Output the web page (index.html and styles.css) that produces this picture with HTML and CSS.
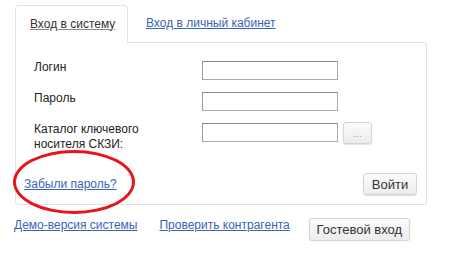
FILE: index.html
```html
<!DOCTYPE html>
<html lang="ru">
<head>
    <meta charset="UTF-8">
    <title>Вход в систему</title>
<link rel="stylesheet" href="styles.css">
</head>
<body>
<div class="login">
    <div class="tabs">
        <div class="tab active"><a class="tab-link">Вход в систему</a></div>
        <div class="tab"><a class="tab-link" href="#">Вход в личный кабинет</a></div>
    </div>
    <div class="panel">
        <div class="row">
            <p class="label">Логин</p>
            <input class="field" type="text">
        </div>
        <div class="row">
            <p class="label">Пароль</p>
            <input class="field" type="password">
        </div>
        <div class="row">
            <p class="label">Каталог ключевого<br>носителя СКЗИ:</p>
            <input class="field" type="text">
            <button class="btn btn-dots">...</button>
        </div>
        <div class="panel-bottom">
            <a class="link forgot" href="#">Забыли пароль?</a>
            <button class="btn btn-enter">Войти</button>
        </div>
    </div>
    <div class="footer">
        <a class="link" href="#">Демо-версия системы</a>
        <a class="link" href="#">Проверить контрагента</a>
        <button class="btn btn-guest">Гостевой вход</button>
    </div>
</div>
<div class="circle"></div>
</body>
</html>
```

FILE: styles.css
```css
body{
    margin: 0;
    background: #fff;
    font-family: Arial, "Liberation Sans", sans-serif;
    font-size: 12px;
    color: #222;
}
.login{
    width: 412px;
    margin: 5px 0 0 15px;
}
.tabs{
    display: flex;
    flex-direction: row;
    height: 37px;
}
.tab{
    display: flex;
    align-items: center;
    white-space: nowrap;
    padding: 0 18px 0 18px;
}
.tab.active{
    width: 113px;
    box-sizing: border-box;
    padding: 0 0 0 14px;
    border: 1px solid #e2e2e2;
    border-bottom: none;
    border-radius: 4px 4px 0 0;
    background: #fff;
    margin-bottom: -1px;
    position: relative;
    z-index: 1;
    height: 38px;
}
.tab-link{
    color: #3b63b6;
    text-decoration: underline;
    padding-bottom: 2px;
}
.tab.active .tab-link{
    color: #333;
    text-decoration-color: #888;
}
.panel{
    height: 163px;
    box-sizing: border-box;
    border: 1px solid #e2e2e2;
    border-radius: 0 3px 3px 3px;
    padding: 18px 9px 9px 18px;
    display: flex;
    flex-direction: column;
}
.row{
    display: flex;
    flex-direction: row;
    align-items: flex-start;
    margin-bottom: 12px;
}
.label{
    width: 168px;
    margin: -1px 0 0;
    line-height: 15px;
}
.field{
    width: 136px;
    height: 19px;
    box-sizing: border-box;
    border: 1px solid #aaa;
    border-top-color: #888;
    border-left-color: #999;
    margin: 0;
    outline: none;
}
.btn{
    font-family: Arial, "Liberation Sans", sans-serif;
    font-size: 12px;
    color: #333;
    background: linear-gradient(180deg, #fbfbfb, #ececec);
    border: 1px solid #d4d4d4;
    border-radius: 3px;
    box-shadow: 0 1px 1px rgba(0,0,0,.12);
    padding: 0;
    cursor: pointer;
}
.btn-dots{
    width: 29px;
    height: 22px;
    margin: -1px 0 0 5px;
    color: #999;
    font-size: 10px;
}
.panel-bottom{
    margin-top: auto;
    display: flex;
    flex-direction: row;
    justify-content: space-between;
    align-items: center;
}
.forgot{
    margin-left: -10px;
}
.btn-enter{
    width: 54px;
    height: 22px;
    font-size: 13px;
}
.link{
    color: #3b63b6;
    text-decoration: underline;
}
.footer{
    display: flex;
    flex-direction: row;
    align-items: flex-start;
    margin: 13px 0 0 -1px;
}
.footer .link{
    margin-top: 0;
}
.footer .link:nth-child(2){
    margin-left: 22px;
}
.btn-guest{
    width: 101px;
    height: 23px;
    margin-left: 19px;
    font-size: 13px;
}
.circle{
    position: absolute;
    left: 13px;
    top: 150px;
    width: 122px;
    height: 64px;
    box-sizing: border-box;
    border: 3px solid #e8141b;
    border-radius: 50%;
}
```
